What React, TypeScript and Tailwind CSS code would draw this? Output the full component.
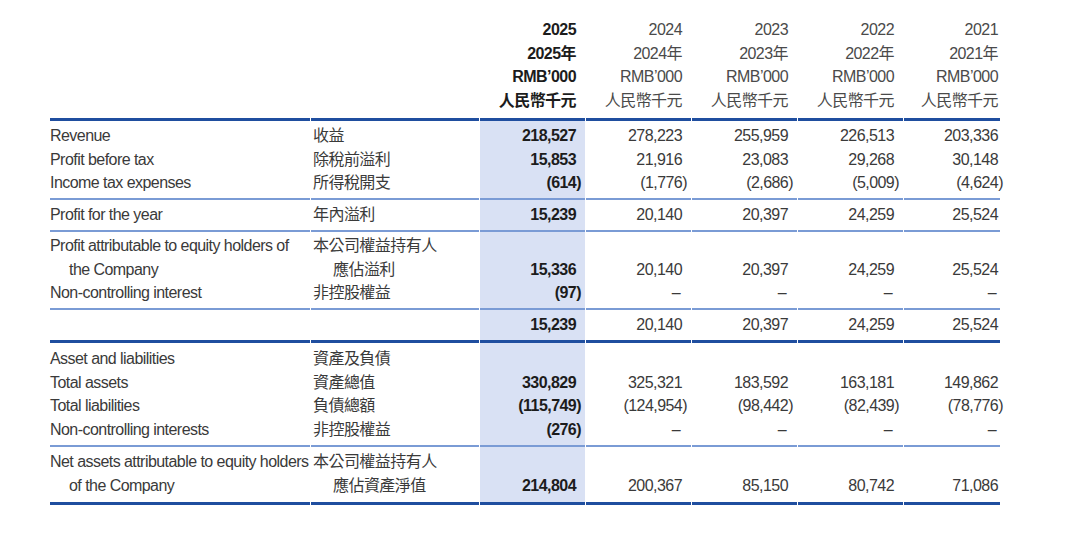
import React from 'react';

type Row = {
  en?: string;
  enIndent?: boolean;
  zh?: string;
  zhIndent?: boolean;
  v?: string[];
};

type Section = {
  rows: Row[];
  pad: string;
  line: 'thin' | 'thick';
};

const grid =
  'grid grid-cols-[260px_168px_105px_105px_105px_105px_96px] gap-x-px';

const years = ['2025', '2024', '2023', '2022', '2021'];

const sections: Section[] = [
  {
    pad: 'pt-[3px] pb-[3.5px]',
    line: 'thin',
    rows: [
      { en: 'Revenue', zh: '收益', v: ['218,527', '278,223', '255,959', '226,513', '203,336'] },
      { en: 'Profit before tax', zh: '除稅前溢利', v: ['15,853', '21,916', '23,083', '29,268', '30,148'] },
      { en: 'Income tax expenses', zh: '所得稅開支', v: ['(614)', '(1,776)', '(2,686)', '(5,009)', '(4,624)'] },
    ],
  },
  {
    pad: 'pt-[2.5px] pb-[3.5px]',
    line: 'thin',
    rows: [
      { en: 'Profit for the year', zh: '年內溢利', v: ['15,239', '20,140', '20,397', '24,259', '25,524'] },
    ],
  },
  {
    pad: 'pt-[2.5px] pb-[3.5px]',
    line: 'thin',
    rows: [
      { en: 'Profit attributable to equity holders of', zh: '本公司權益持有人' },
      { en: 'the Company', enIndent: true, zh: '應佔溢利', zhIndent: true, v: ['15,336', '20,140', '20,397', '24,259', '25,524'] },
      { en: 'Non-controlling interest', zh: '非控股權益', v: ['(97)', '–', '–', '–', '–'] },
    ],
  },
  {
    pad: 'pt-[2.5px] pb-[4px]',
    line: 'thick',
    rows: [{ v: ['15,239', '20,140', '20,397', '24,259', '25,524'] }],
  },
  {
    pad: 'pt-[4px] pb-[4px]',
    line: 'thin',
    rows: [
      { en: 'Asset and liabilities', zh: '資產及負債' },
      { en: 'Total assets', zh: '資產總值', v: ['330,829', '325,321', '183,592', '163,181', '149,862'] },
      { en: 'Total liabilities', zh: '負債總額', v: ['(115,749)', '(124,954)', '(98,442)', '(82,439)', '(78,776)'] },
      { en: 'Non-controlling interests', zh: '非控股權益', v: ['(276)', '–', '–', '–', '–'] },
    ],
  },
  {
    pad: 'pt-[3px] pb-[5px]',
    line: 'thick',
    rows: [
      { en: 'Net assets attributable to equity holders', zh: '本公司權益持有人' },
      { en: 'of the Company', enIndent: true, zh: '應佔資產淨值', zhIndent: true, v: ['214,804', '200,367', '85,150', '80,742', '71,086'] },
    ],
  },
];

function Value({ text }: { text?: string }) {
  if (!text) return <span>&nbsp;</span>;
  if (text === '–') return <span className="mr-[2px]">–</span>;
  if (text.startsWith('(')) {
    return (
      <span>
        {text.slice(0, -1)}
        <span className="-mr-[5px]">)</span>
      </span>
    );
  }
  return <span>{text}</span>;
}

function TableSection({ section }: { section: Section }) {
  const line =
    section.line === 'thick'
      ? 'border-b-[3px] border-[#1f4e9f]'
      : 'border-b-2 border-[#7a9bd5]';

  return (
    <div className={grid}>
      <div className={`${section.pad} ${line}`}>
        {section.rows.map((r, i) => (
          <div key={i} className={`h-[23.5px] leading-[23.5px] whitespace-nowrap ${r.enIndent ? 'pl-[19px]' : ''}`}>
            {r.en ?? '\u00a0'}
          </div>
        ))}
      </div>
      <div className={`${section.pad} ${line}`}>
        {section.rows.map((r, i) => (
          <div key={i} className={`h-[23.5px] leading-[23.5px] whitespace-nowrap ${r.zhIndent ? 'pl-[22px]' : 'pl-[2px]'}`}>
            {r.zh ?? '\u00a0'}
          </div>
        ))}
      </div>
      {years.map((y, c) => (
        <div
          key={y}
          className={`${section.pad} ${line} text-right ${c === 4 ? 'pr-[2px]' : 'pr-[9px]'} ${
            c === 0 ? 'bg-[#d9e1f4] font-bold text-[#1c1c1c]' : ''
          }`}
        >
          {section.rows.map((r, i) => (
            <div key={i} className="h-[23.5px] leading-[23.5px] whitespace-nowrap">
              <Value text={r.v?.[c]} />
            </div>
          ))}
        </div>
      ))}
    </div>
  );
}

export default function App() {
  return (
    <div
      className="min-h-[541px] w-[1080px] bg-white pl-[50px] pt-[18px] text-[16px] tracking-[-0.55px] text-[#3a3a3a]"
      style={{ fontFamily: '"Liberation Sans", "Noto Sans CJK TC", sans-serif' }}
    >
      {/* Header */}
      <div className={grid}>
        <div className="border-b-[3px] border-[#1f4e9f]" />
        <div className="border-b-[3px] border-[#1f4e9f]" />
        {years.map((y, c) => (
          <div
            key={y}
            className={`border-b-[3px] border-[#1f4e9f] pb-[6px] text-right ${c === 4 ? 'pr-[2px]' : 'pr-[9px]'} ${
              c === 0 ? 'font-bold text-[#1c1c1c]' : 'text-[#4a4a4a]'
            }`}
          >
            <div className="h-[23.5px] leading-[23.5px]">{y}</div>
            <div className="h-[23.5px] leading-[23.5px]">{y}年</div>
            <div className="h-[23.5px] leading-[23.5px]">RMB’000</div>
            <div className="h-[23.5px] leading-[23.5px]">人民幣千元</div>
          </div>
        ))}
      </div>

      {sections.map((s, i) => (
        <TableSection key={i} section={s} />
      ))}
    </div>
  );
}
